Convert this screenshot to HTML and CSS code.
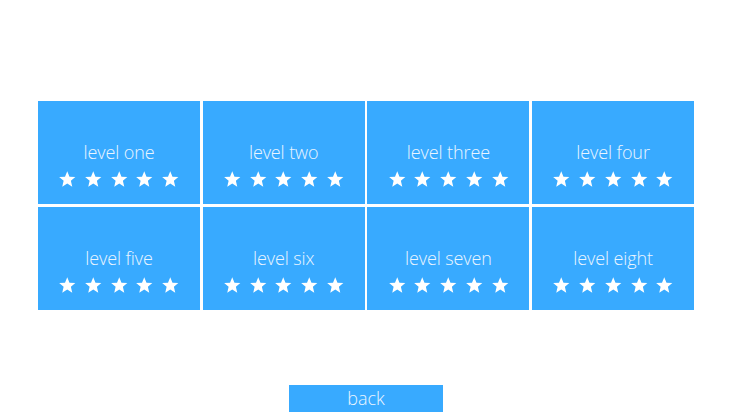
FILE: index.html
```html
<!DOCTYPE html>
<html>
<head>
<meta charset="utf-8">
<link rel="stylesheet" href="styles.css">
</head>
<body>
<svg width="0" height="0" class="defs">
  <defs>
    <symbol id="star" viewBox="0 0 24 24">
      <polygon points="12,1.5 14.9,8.6 22.5,9.2 16.7,14.1 18.5,21.6 12,17.6 5.5,21.6 7.3,14.1 1.5,9.2 9.1,8.6" fill="#fff"/>
    </symbol>
  </defs>
</svg>
<main class="screen">
  <section class="levels">
    <div class="tile"><span class="name">level one</span><div class="stars"><svg><use href="#star"/></svg><svg><use href="#star"/></svg><svg><use href="#star"/></svg><svg><use href="#star"/></svg><svg><use href="#star"/></svg></div></div>
    <div class="tile"><span class="name">level two</span><div class="stars"><svg><use href="#star"/></svg><svg><use href="#star"/></svg><svg><use href="#star"/></svg><svg><use href="#star"/></svg><svg><use href="#star"/></svg></div></div>
    <div class="tile"><span class="name">level three</span><div class="stars"><svg><use href="#star"/></svg><svg><use href="#star"/></svg><svg><use href="#star"/></svg><svg><use href="#star"/></svg><svg><use href="#star"/></svg></div></div>
    <div class="tile"><span class="name">level four</span><div class="stars"><svg><use href="#star"/></svg><svg><use href="#star"/></svg><svg><use href="#star"/></svg><svg><use href="#star"/></svg><svg><use href="#star"/></svg></div></div>
    <div class="tile"><span class="name">level five</span><div class="stars"><svg><use href="#star"/></svg><svg><use href="#star"/></svg><svg><use href="#star"/></svg><svg><use href="#star"/></svg><svg><use href="#star"/></svg></div></div>
    <div class="tile"><span class="name">level six</span><div class="stars"><svg><use href="#star"/></svg><svg><use href="#star"/></svg><svg><use href="#star"/></svg><svg><use href="#star"/></svg><svg><use href="#star"/></svg></div></div>
    <div class="tile"><span class="name">level seven</span><div class="stars"><svg><use href="#star"/></svg><svg><use href="#star"/></svg><svg><use href="#star"/></svg><svg><use href="#star"/></svg><svg><use href="#star"/></svg></div></div>
    <div class="tile"><span class="name">level eight</span><div class="stars"><svg><use href="#star"/></svg><svg><use href="#star"/></svg><svg><use href="#star"/></svg><svg><use href="#star"/></svg><svg><use href="#star"/></svg></div></div>
  </section>
  <button class="back">back</button>
</main>
</body>
</html>
```
FILE: styles.css
```css
html, body {
  margin: 0;
  padding: 0;
  background: #fff;
  height: 100%;
  overflow: hidden;
}

.defs {
  position: absolute;
  width: 0;
  height: 0;
}

.screen {
  display: flex;
  flex-direction: column;
  align-items: center;
  padding-top: 101px;
  font-family: "Open Sans", "Lato", sans-serif;
  font-weight: 300;
}

.levels {
  display: grid;
  grid-template-columns: repeat(4, 162px);
  grid-auto-rows: 103px;
  gap: 2.6px 2.7px;
  width: 656px;
}

.tile {
  background: #38aaff;
  display: flex;
  flex-direction: column;
  align-items: center;
  justify-content: flex-start;
  padding-top: 39px;
  box-sizing: border-box;
  color: #eaf5ff;
}

.name {
  font-size: 18px;
  line-height: 24px;
  letter-spacing: -0.1px;
}

.stars {
  display: flex;
  gap: 7.2px;
  margin-top: 6px;
}

.stars svg {
  width: 18.5px;
  height: 18.5px;
}

.back {
  margin-top: 75px;
  width: 154px;
  height: 30px;
  border: 0;
  padding: 0 0 3px;
  background: #38aaff;
  color: #eaf5ff;
  font-family: inherit;
  font-weight: 300;
  font-size: 18px;
  line-height: 22px;
}
```
